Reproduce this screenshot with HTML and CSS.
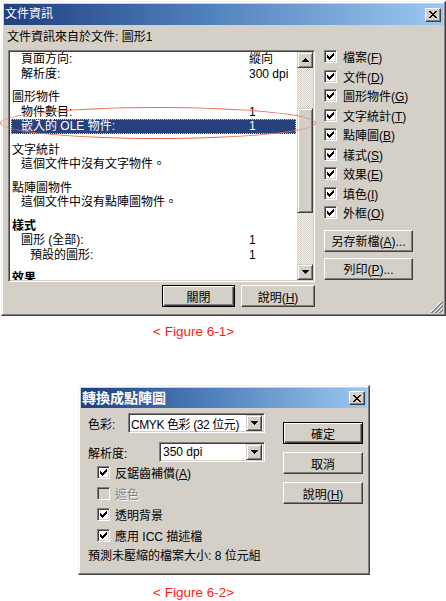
FILE: index.html
```html
<!DOCTYPE html>
<html lang="zh-Hant">
<head>
<meta charset="UTF-8">
<title>文件資訊</title>
<link rel="stylesheet" href="styles.css">
</head>
<body>
<div class="dlg info">
  <div class="titlebar">
    <span class="title">文件資訊</span>
    <span class="tb-close"><svg width="8" height="7" viewBox="0 0 8 7"><path d="M0 0h2v1H0zM6 0h2v1H6zM1 1h2v1H1zM5 1h2v1H5zM2 2h4v1H2zM3 3h2v1H3zM2 4h4v1H2zM1 5h2v1H1zM5 5h2v1H5zM0 6h2v1H0zM6 6h2v1H6z"/></svg></span>
  </div>
  <div class="info-body">
    <div class="subtitle">文件資訊來自於文件: 圖形1</div>
    <div class="info-main">
      <div class="info-left">
        <div class="listbox">
          <div class="list">
            <div class="grp first">
              <div class="row sub"><span>頁面方向:</span><span>縱向</span></div>
              <div class="row sub"><span>解析度:</span><span>300 dpi</span></div>
            </div>
            <div class="grp">
              <div class="row head"><span>圖形物件</span></div>
              <div class="row sub"><span>物件數目:</span><span>1</span></div>
              <div class="row sub sel"><span>嵌入的 OLE 物件:</span><span>1</span></div>
            </div>
            <div class="grp">
              <div class="row head"><span>文字統計</span></div>
              <div class="row sub"><span>這個文件中沒有文字物件。</span></div>
            </div>
            <div class="grp">
              <div class="row head"><span>點陣圖物件</span></div>
              <div class="row sub"><span>這個文件中沒有點陣圖物件。</span></div>
            </div>
            <div class="grp">
              <div class="row head bold"><span>樣式</span></div>
              <div class="row sub"><span>圖形 (全部):</span><span>1</span></div>
              <div class="row sub2"><span>預設的圖形:</span><span>1</span></div>
            </div>
            <div class="grp">
              <div class="row head bold"><span>效果</span></div>
            </div>
          </div>
          <div class="vscroll">
            <div class="sb-btn"><svg width="7" height="4" viewBox="0 0 7 4"><path d="M3 0h1v1h1v1h1v1h1v1H0V3h1V2h1V1h1z"/></svg></div>
            <div class="sb-gap"></div>
            <div class="sb-thumb"></div>
            <div class="sb-rest"></div>
            <div class="sb-btn"><svg width="7" height="4" viewBox="0 0 7 4"><path d="M0 0h7v1H6v1H5v1H4v1H3V3H2V2H1V1H0z"/></svg></div>
          </div>
        </div>
        <div class="btn-row">
          <button class="btn default close-btn">關閉</button>
          <button class="btn help-btn">說明(<u>H</u>)</button>
        </div>
      </div>
      <div class="info-right">
        <div class="chk"><span class="box"><svg class="tick" width="7" height="7" viewBox="0 0 7 7"><path d="M6 0h1v1H6zM5 1h2v1H5zM0 2h1v1H0zM4 2h3v1H4zM0 3h2v1H0zM3 3h3v1H3zM0 4h5v1H0zM1 5h3v1H1zM2 6h1v1H2z"/></svg></span><span>檔案(<u>F</u>)</span></div>
        <div class="chk"><span class="box"><svg class="tick" width="7" height="7" viewBox="0 0 7 7"><path d="M6 0h1v1H6zM5 1h2v1H5zM0 2h1v1H0zM4 2h3v1H4zM0 3h2v1H0zM3 3h3v1H3zM0 4h5v1H0zM1 5h3v1H1zM2 6h1v1H2z"/></svg></span><span>文件(<u>D</u>)</span></div>
        <div class="chk"><span class="box"><svg class="tick" width="7" height="7" viewBox="0 0 7 7"><path d="M6 0h1v1H6zM5 1h2v1H5zM0 2h1v1H0zM4 2h3v1H4zM0 3h2v1H0zM3 3h3v1H3zM0 4h5v1H0zM1 5h3v1H1zM2 6h1v1H2z"/></svg></span><span>圖形物件(<u>G</u>)</span></div>
        <div class="chk"><span class="box"><svg class="tick" width="7" height="7" viewBox="0 0 7 7"><path d="M6 0h1v1H6zM5 1h2v1H5zM0 2h1v1H0zM4 2h3v1H4zM0 3h2v1H0zM3 3h3v1H3zM0 4h5v1H0zM1 5h3v1H1zM2 6h1v1H2z"/></svg></span><span>文字統計(<u>T</u>)</span></div>
        <div class="chk"><span class="box"><svg class="tick" width="7" height="7" viewBox="0 0 7 7"><path d="M6 0h1v1H6zM5 1h2v1H5zM0 2h1v1H0zM4 2h3v1H4zM0 3h2v1H0zM3 3h3v1H3zM0 4h5v1H0zM1 5h3v1H1zM2 6h1v1H2z"/></svg></span><span>點陣圖(<u>B</u>)</span></div>
        <div class="chk"><span class="box"><svg class="tick" width="7" height="7" viewBox="0 0 7 7"><path d="M6 0h1v1H6zM5 1h2v1H5zM0 2h1v1H0zM4 2h3v1H4zM0 3h2v1H0zM3 3h3v1H3zM0 4h5v1H0zM1 5h3v1H1zM2 6h1v1H2z"/></svg></span><span>樣式(<u>S</u>)</span></div>
        <div class="chk"><span class="box"><svg class="tick" width="7" height="7" viewBox="0 0 7 7"><path d="M6 0h1v1H6zM5 1h2v1H5zM0 2h1v1H0zM4 2h3v1H4zM0 3h2v1H0zM3 3h3v1H3zM0 4h5v1H0zM1 5h3v1H1zM2 6h1v1H2z"/></svg></span><span>效果(<u>E</u>)</span></div>
        <div class="chk"><span class="box"><svg class="tick" width="7" height="7" viewBox="0 0 7 7"><path d="M6 0h1v1H6zM5 1h2v1H5zM0 2h1v1H0zM4 2h3v1H4zM0 3h2v1H0zM3 3h3v1H3zM0 4h5v1H0zM1 5h3v1H1zM2 6h1v1H2z"/></svg></span><span>填色(<u>I</u>)</span></div>
        <div class="chk"><span class="box"><svg class="tick" width="7" height="7" viewBox="0 0 7 7"><path d="M6 0h1v1H6zM5 1h2v1H5zM0 2h1v1H0zM4 2h3v1H4zM0 3h2v1H0zM3 3h3v1H3zM0 4h5v1H0zM1 5h3v1H1zM2 6h1v1H2z"/></svg></span><span>外框(<u>O</u>)</span></div>
        <button class="btn side-btn save-btn">另存新檔(<u>A</u>)...</button>
        <button class="btn side-btn">列印(<u>P</u>)...</button>
      </div>
    </div>
  </div>
  <div class="ellipse"></div>
  <div class="grip"><svg width="12" height="12" viewBox="0 0 12 12"><path d="M11 0L0 11M11 4L4 11M11 8L8 11" stroke="#fff"/><path d="M12 0L0 12M12 1L1 12M12 4L4 12M12 5L5 12M12 8L8 12M12 9L9 12" stroke="#808080"/></svg></div>
</div>

<div class="caption">&lt; Figure 6-1&gt;</div>

<div class="dlg convert">
  <div class="titlebar">
    <span class="title bold-title">轉換成點陣圖</span>
    <span class="tb-close"><svg width="8" height="7" viewBox="0 0 8 7"><path d="M0 0h2v1H0zM6 0h2v1H6zM1 1h2v1H1zM5 1h2v1H5zM2 2h4v1H2zM3 3h2v1H3zM2 4h4v1H2zM1 5h2v1H1zM5 5h2v1H5zM0 6h2v1H0zM6 6h2v1H6z"/></svg></span>
  </div>
  <div class="conv-body">
    <div class="conv-left">
      <div class="field">
        <span class="field-label color-label">色彩:</span>
        <div class="combo color-combo">
          <span class="combo-text tight">CMYK 色彩 (32 位元)</span>
          <span class="drop"><svg width="7" height="4" viewBox="0 0 7 4"><path d="M0 0h7v1H6v1H5v1H4v1H3V3H2V2H1V1H0z"/></svg></span>
        </div>
      </div>
      <div class="field res-field">
        <span class="field-label res-label">解析度:</span>
        <div class="combo res-combo">
          <span class="combo-text">350 dpi</span>
          <span class="drop"><svg width="7" height="4" viewBox="0 0 7 4"><path d="M0 0h7v1H6v1H5v1H4v1H3V3H2V2H1V1H0z"/></svg></span>
        </div>
      </div>
      <div class="opts">
        <div class="chk opt"><span class="box"><svg class="tick" width="7" height="7" viewBox="0 0 7 7"><path d="M6 0h1v1H6zM5 1h2v1H5zM0 2h1v1H0zM4 2h3v1H4zM0 3h2v1H0zM3 3h3v1H3zM0 4h5v1H0zM1 5h3v1H1zM2 6h1v1H2z"/></svg></span><span>反鋸齒補償(<u>A</u>)</span></div>
        <div class="chk opt disabled"><span class="box"></span><span>遮色</span></div>
        <div class="chk opt"><span class="box"><svg class="tick" width="7" height="7" viewBox="0 0 7 7"><path d="M6 0h1v1H6zM5 1h2v1H5zM0 2h1v1H0zM4 2h3v1H4zM0 3h2v1H0zM3 3h3v1H3zM0 4h5v1H0zM1 5h3v1H1zM2 6h1v1H2z"/></svg></span><span>透明背景</span></div>
        <div class="chk opt"><span class="box"><svg class="tick" width="7" height="7" viewBox="0 0 7 7"><path d="M6 0h1v1H6zM5 1h2v1H5zM0 2h1v1H0zM4 2h3v1H4zM0 3h2v1H0zM3 3h3v1H3zM0 4h5v1H0zM1 5h3v1H1zM2 6h1v1H2z"/></svg></span><span>應用 ICC 描述檔</span></div>
      </div>
      <div class="status">預測未壓縮的檔案大小: 8 位元組</div>
    </div>
    <div class="conv-right">
      <button class="btn default conv-btn">確定</button>
      <button class="btn conv-btn">取消</button>
      <button class="btn conv-btn">說明(<u>H</u>)</button>
    </div>
  </div>
</div>

<div class="caption caption2">&lt; Figure 6-2&gt;</div>
</body>
</html>
```

FILE: styles.css
```css
body {
margin: 0;
background: #fff;
font-family: "Liberation Sans", "Noto Sans CJK TC", sans-serif;
font-size: 12px;
color: #000;
}
.dlg {
position: relative;
box-sizing: border-box;
background: #d4d0c8;
border: 1px solid;
border-color: #f4f2ee #404040 #404040 #f4f2ee;
box-shadow: inset -1px -1px #808080, inset 1px 1px #fff;
padding: 2px;
}
.info {
width: 445px;
height: 315px;
margin: 1px 0 0 1px;
}
.titlebar {
display: flex;
align-items: center;
justify-content: space-between;
height: 21px;
padding: 0 2px 0 1px;
background: linear-gradient(to right, #1f3f7f, #4f7fbb 45%, #9cc8f0);
color: #fff;
}
.title {
font-size: 12px;
line-height: 21px;
}
.bold-title {
font-size: 14px;
font-weight: bold;
}
.tb-close {
width: 16px;
height: 14px;
box-sizing: border-box;
display: flex;
align-items: center;
justify-content: center;
background: #d4d0c8;
border: 1px solid;
border-color: #fff #404040 #404040 #fff;
box-shadow: inset -1px -1px #808080;
}
.info-body {
padding: 4px 0 0 4px;
}
.subtitle {
margin-left: -1px;
height: 16px;
line-height: 16px;
margin-bottom: 5px;
}
.info-main {
display: grid;
grid-template-columns: 307px 89px;
column-gap: 9px;
}
.listbox {
display: flex;
box-sizing: border-box;
width: 307px;
height: 232px;
border: 1px solid;
border-color: #808080 #fff #fff #808080;
box-shadow: inset 1px 1px #404040, inset -1px -1px #d4d0c8;
padding: 1px;
}
.list {
flex: 1;
background: #fff;
overflow: hidden;
padding: 0 1px;
}
.grp {
margin-top: 9px;
}
.grp.first {
margin-top: 0;
}
.row {
display: grid;
grid-template-columns: 238px 1fr;
height: 14.5px;
line-height: 14.5px;
white-space: nowrap;
}
.row.head span:first-child {
padding-left: 1px;
}
.row.sub span:first-child {
padding-left: 10px;
}
.row.sub2 span:first-child {
padding-left: 19px;
}
.row.bold {
font-weight: bold;
}
.row.sel {
background: #27417d;
color: #fff;
outline: 1px dotted #d6cc80;
outline-offset: -1px;
}
.vscroll {
width: 16px;
display: flex;
flex-direction: column;
background: repeating-conic-gradient(#d4d0c8 0 25%, #f4f2ee 0 50%) 0 0 / 2px 2px;
}
.sb-btn,
.sb-thumb,
.drop {
box-sizing: border-box;
background: #d4d0c8;
border: 1px solid;
border-color: #d4d0c8 #404040 #404040 #d4d0c8;
box-shadow: inset 1px 1px #fff, inset -1px -1px #808080;
}
.sb-btn {
height: 16px;
display: flex;
align-items: center;
justify-content: center;
}
.sb-gap {
height: 40px;
}
.sb-thumb {
height: 105px;
}
.sb-rest {
flex: 1;
}
.btn {
box-sizing: border-box;
height: 22px;
padding: 0;
font: inherit;
color: #000;
background: #d4d0c8;
border: 1px solid;
border-color: #fff #404040 #404040 #fff;
box-shadow: inset -1px -1px #808080;
}
.btn.default {
border-color: #000;
box-shadow: inset 1px 1px #fff, inset -1px -1px #404040, inset -2px -2px #808080;
}
.btn-row {
display: flex;
gap: 6px;
margin-top: 3px;
margin-left: 154px;
}
.close-btn {
width: 74px;
}
.help-btn {
width: 75px;
}
.info-right {
display: flex;
flex-direction: column;
margin-top: -3px;
}
.chk {
display: flex;
align-items: center;
gap: 6px;
height: 19.5px;
white-space: nowrap;
}
.box {
flex: none;
width: 13px;
height: 13px;
box-sizing: border-box;
display: flex;
align-items: center;
justify-content: center;
background: #fff;
border: 1px solid;
border-color: #808080 #fff #fff #808080;
box-shadow: inset 1px 1px #404040, inset -1px -1px #d4d0c8;
}
.side-btn {
width: 89px;
margin-bottom: 6px;
}
.save-btn {
margin-top: 7px;
}
.ellipse {
position: absolute;
left: -2px;
top: 105px;
width: 316px;
height: 32px;
box-sizing: border-box;
border: 1.5px solid #ea6a4c;
border-radius: 50%;
}
.grip {
position: absolute;
right: 2px;
bottom: 2px;
width: 12px;
height: 12px;
}
.caption {
margin: 8px 0 0 153px;
height: 16px;
line-height: 16px;
font-size: 13.5px;
color: #ff1a1a;
}
.caption2 {
margin-top: 10px;
}
.convert {
width: 292px;
height: 190px;
margin: 45px 0 0 78px;
}
.convert .titlebar {
height: 20px;
}
.conv-body {
display: flex;
}
.conv-left {
flex: 1;
padding: 5px 0 0 7px;
}
.field {
display: flex;
align-items: center;
height: 20px;
}
.res-field {
margin-top: 9px;
}
.field-label {
flex: none;
}
.color-label {
width: 40px;
}
.res-label {
width: 71px;
}
.combo {
display: flex;
align-items: center;
box-sizing: border-box;
height: 20px;
background: #fff;
border: 1px solid;
border-color: #808080 #fff #fff #808080;
box-shadow: inset 1px 1px #404040, inset -1px -1px #d4d0c8;
padding: 2px;
}
.color-combo {
width: 137px;
}
.res-combo {
width: 106px;
}
.combo-text {
flex: 1;
padding-left: 1px;
white-space: nowrap;
overflow: hidden;
}
.combo-text.tight {
letter-spacing: -0.4px;
padding-left: 0;
}
.drop {
flex: none;
width: 16px;
height: 16px;
display: flex;
align-items: center;
justify-content: center;
}
.opts {
padding-left: 9px;
}
.opt {
height: 21px;
gap: 5px;
}
.opt.disabled {
color: #808080;
text-shadow: 1px 1px #fff;
}
.opt.disabled .box {
background: #d4d0c8;
}
.status {
height: 20px;
line-height: 20px;
white-space: nowrap;
}
.conv-right {
width: 80px;
margin: 14px 4px 0 0;
display: flex;
flex-direction: column;
gap: 8px;
}
.conv-btn {
width: 80px;
}
```
